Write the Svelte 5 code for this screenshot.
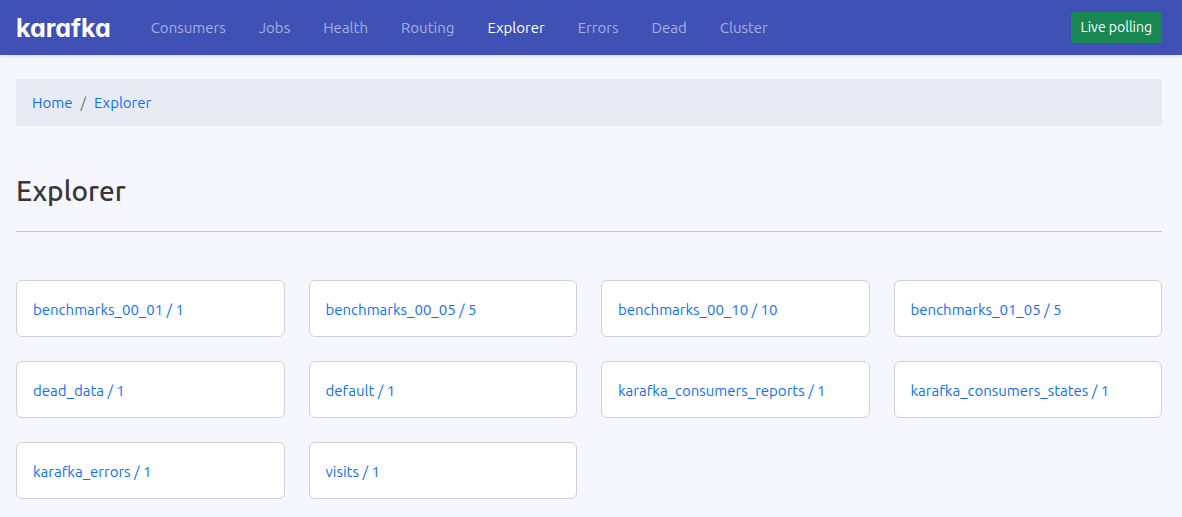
<script>
  const nav = ['Consumers', 'Jobs', 'Health', 'Routing', 'Explorer', 'Errors', 'Dead', 'Cluster'];
  const active = 'Explorer';
  const topics = [
    { name: 'benchmarks_00_01', partitions: 1 },
    { name: 'benchmarks_00_05', partitions: 5 },
    { name: 'benchmarks_00_10', partitions: 10 },
    { name: 'benchmarks_01_05', partitions: 5 },
    { name: 'dead_data', partitions: 1 },
    { name: 'default', partitions: 1 },
    { name: 'karafka_consumers_reports', partitions: 1 },
    { name: 'karafka_consumers_states', partitions: 1 },
    { name: 'karafka_errors', partitions: 1 },
    { name: 'visits', partitions: 1 }
  ];
</script>

<header>
  <a class="brand" href="#home">karafka</a>
  <nav aria-label="Main">
    {#each nav as item}
      <a href="#{item.toLowerCase()}" class:active={item === active} aria-current={item === active ? 'page' : undefined}>{item}</a>
    {/each}
  </nav>
  <button type="button">Live polling</button>
</header>

<main>
  <nav class="breadcrumb" aria-label="Breadcrumb">
    <a href="#home">Home</a>
    <span>/</span>
    <a href="#explorer">Explorer</a>
  </nav>

  <h1>Explorer</h1>

  <div class="topics">
    {#each topics as topic}
      <div class="card">
        <a href="#{topic.name}">{topic.name} / {topic.partitions}</a>
      </div>
    {/each}
  </div>
</main>

<style>
  :global(body) {
    margin: 0;
    background: #f5f6ff;
    color: #373737;
    font-family: Ubuntu, 'Noto Sans', sans-serif;
    font-size: 15px;
    line-height: 23px;
  }

  a {
    color: #0d6efd;
    text-decoration: none;
  }

  header {
    display: flex;
    align-items: center;
    height: 55px;
    padding: 0 20px 0 16px;
    background: #3f51b5;
    box-shadow: 0 2px 4px rgba(0, 0, 0, 0.08);
  }

  .brand {
    margin-right: 40px;
    color: #fff;
    font-family: Inter, sans-serif;
    font-feature-settings: 'cv11';
    font-size: 25px;
    font-weight: 700;
    line-height: 32px;
  }

  header nav {
    display: flex;
    flex: 1;
    gap: 33px;
  }

  header nav a {
    color: rgba(255, 255, 255, 0.55);
  }

  header nav a.active {
    color: #fff;
  }

  button {
    padding: 4px 10px;
    border: 0;
    border-radius: 3px;
    background: #198754;
    color: #fff;
    font: inherit;
    font-size: 14px;
  }

  main {
    padding: 24px 20px 18px 16px;
  }

  .breadcrumb {
    display: flex;
    gap: 8px;
    padding: 12px 16px;
    background: #e8ebf4;
  }

  .breadcrumb span {
    color: #6c757d;
  }

  h1 {
    margin: 48px 0;
    padding-bottom: 24px;
    border-bottom: 1px solid #c5c6cb;
    font-size: 28px;
    font-weight: 500;
    line-height: 33px;
  }

  .topics {
    display: grid;
    grid-template-columns: repeat(4, minmax(0, 1fr));
    gap: 24px;
  }

  .card {
    padding: 17px 16px 15px;
    border: 1px solid #d0d1d4;
    border-radius: 6px;
    background: #fff;
  }
</style>
